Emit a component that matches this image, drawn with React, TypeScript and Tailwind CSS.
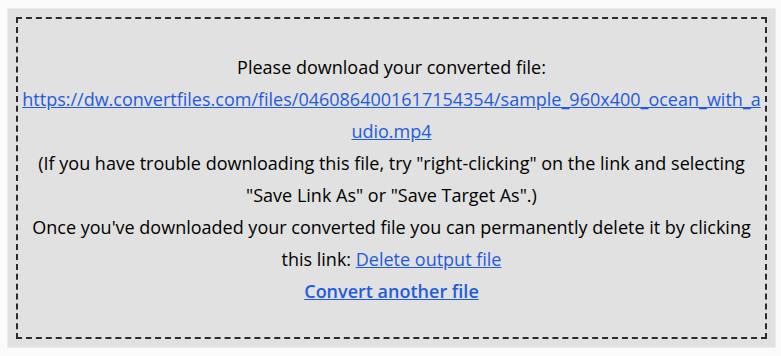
export default function App() {
  const url =
    "https://dw.convertfiles.com/files/0460864001617154354/sample_960x400_ocean_with_audio.mp4";

  return (
    <div className="w-[781px] h-[356px] bg-[#fbfbfb] pt-[8px] pl-[7px] pr-[5px] font-['Open_Sans',sans-serif] text-[18px] text-black">
      <div className="h-[340px] bg-[#e1e1e1] border border-[#ececec] p-[8px]">
        <div className="h-full border-2 border-dashed border-[#2b2b2b] px-[3px] pt-[32px] text-center leading-[32px]">
          <p>Please download your converted file:</p>
          <p className="break-all">
            <a href="#" className="text-[#1f5bdc] underline">
              {url}
            </a>
          </p>
          <p>
            (If you have trouble downloading this file, try "right-clicking" on the link and selecting "Save Link As" or
            "Save Target As".)
          </p>
          <p>
            Once you've downloaded your converted file you can permanently delete it by clicking this link:{" "}
            <a href="#" className="text-[#1f5bdc] underline">
              Delete output file
            </a>
          </p>
          <p>
            <a href="#" className="text-[#1f5bdc] underline font-semibold">
              Convert another file
            </a>
          </p>
        </div>
      </div>
    </div>
  );
}
